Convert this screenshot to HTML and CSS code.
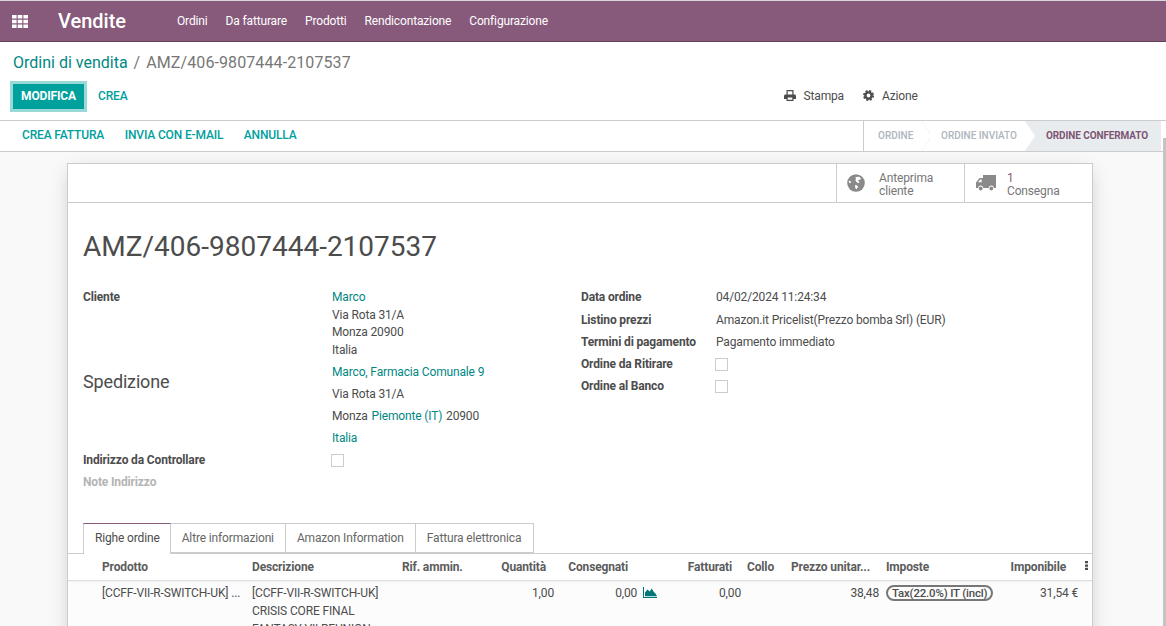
FILE: index.html
```html
<!DOCTYPE html>
<html lang="it">
<head>
    <meta charset="UTF-8">
    <title>AMZ/406-9807444-2107537 - Vendite</title>
    <link rel="stylesheet" href="styles.css">
</head>
<body>
    <nav class="navbar">
        <svg class="apps-icon" width="16" height="13" viewBox="0 0 16 13">
            <path fill="#fff" d="M0 0h4.600v3.600H0zM5.700 0h4.600v3.600H5.700zM11.400 0H16v3.600h-4.600zM0 4.700h4.600v3.600H0zM5.700 4.700h4.600v3.600H5.700zM11.400 4.700H16v3.600h-4.600zM0 9.400h4.600V13H0zM5.700 9.400h4.600V13H5.700zM11.400 9.400H16V13h-4.600z"/>
        </svg>
        <span class="brand">Vendite</span>
        <a class="nav-link">Ordini</a>
        <a class="nav-link">Da fatturare</a>
        <a class="nav-link">Prodotti</a>
        <a class="nav-link">Rendicontazione</a>
        <a class="nav-link">Configurazione</a>
    </nav>

    <header class="control-panel">
        <div class="breadcrumb"><a>Ordini di vendita</a><span class="sep">/</span><span class="current">AMZ/406-9807444-2107537</span></div>
        <div class="cp-row">
            <button class="btn-primary">MODIFICA</button>
            <button class="btn-link">CREA</button>
            <div class="cp-actions">
                <span class="cp-action">
                    <svg width="12" height="11" viewBox="0 0 12 11">
                        <path fill="#4c4c4c" d="M2.500 0h7v4.500h1c.8 0 1.500.7 1.500 1.500v3H9.500v2h-7V9H0V6c0-.8.7-1.500 1.500-1.500h1zM3.700 1.200v3.300h4.600V1.200zM3.700 7.500v2.300h4.600V7.500z"/>
                    </svg>
                    Stampa
                </span>
                <span class="cp-action">
                    <svg width="11" height="11" viewBox="0 0 12 12">
                        <circle cx="6" cy="6" r="3.400" fill="none" stroke="#4c4c4c" stroke-width="2.600"/>
                        <circle cx="6" cy="6" r="5" fill="none" stroke="#4c4c4c" stroke-width="2" stroke-dasharray="2.300 1.630"/>
                    </svg>
                    Azione
                </span>
            </div>
        </div>
    </header>

    <div class="statusbar">
        <div class="status-actions">
            <a>CREA FATTURA</a>
            <a>INVIA CON E-MAIL</a>
            <a>ANNULLA</a>
        </div>
        <div class="status-steps">
            <span class="step step-first">ORDINE</span>
            <span class="step step-second">ORDINE INVIATO</span>
            <span class="step step-active">ORDINE CONFERMATO</span>
        </div>
    </div>

    <main class="content">
        <div class="sheet">
            <div class="button-box">
                <div class="stat-button stat-preview">
                    <svg width="18" height="18" viewBox="0 0 18 18">
                        <circle cx="9" cy="9" r="8.800" fill="#8a8a8a"/>
                        <path fill="#fff" d="M9 3l3.200-.2 1.800 1.700-1 1.500-1.200-.5-.7 1.300 1.500 1.100-1.200 1.400-1.900-1.200-1.200-1.900.8-1.400-.9-1.100zM8 11l2.300.6.7 1.400-1.600 2.200-.9-.6-.4-2zM2 6.500l1.300.5.9 1.400-1.200.9-1.200-1.100z"/>
                    </svg>
                    <span class="stat-text">Anteprima<br>cliente</span>
                </div>
                <div class="stat-button stat-delivery">
                    <svg width="20" height="16" viewBox="0 0 20 16">
                        <path fill="#8a8a8a" d="M7 0h13v13h-2.200a2.500 2.500 0 0 0-5 0H7.200a2.500 2.500 0 0 0-5 0H0V7.500L3.500 3H7zM2 7.300h3.700V4.500H4.200z"/>
                        <circle cx="4.700" cy="13.500" r="1.900" fill="#8a8a8a"/>
                        <circle cx="15.300" cy="13.500" r="1.900" fill="#8a8a8a"/>
                    </svg>
                    <span class="stat-text"><span class="stat-value">1</span><br>Consegna</span>
                </div>
            </div>

            <h1 class="order-title">AMZ/406-9807444-2107537</h1>

            <div class="form-groups">
                <div class="form-left">
                    <div class="label">Cliente</div>
                    <div class="address">
                        <a>Marco</a><br>Via Rota 31/A<br>Monza 20900<br>Italia
                    </div>
                    <div class="label-big">Spedizione</div>
                    <div class="ship-line"><a>Marco, Farmacia Comunale 9</a></div>
                    <div class="ship-line">Via Rota 31/A</div>
                    <div class="ship-line">Monza <a class="gap">Piemonte (IT)</a> <span class="gap">20900</span></div>
                    <div class="ship-line"><a>Italia</a></div>
                    <div class="label row-22">Indirizzo da Controllare</div>
                    <div class="row-22"><span class="checkbox"></span></div>
                    <div class="label label-muted row-22">Note Indirizzo</div>
                    <div class="row-22"></div>
                </div>
                <div class="form-right">
                    <div class="label">Data ordine</div><div>04/02/2024 11:24:34</div>
                    <div class="label">Listino prezzi</div><div>Amazon.it Pricelist(Prezzo bomba Srl) (EUR)</div>
                    <div class="label">Termini di pagamento</div><div>Pagamento immediato</div>
                    <div class="label">Ordine da Ritirare</div><div><span class="checkbox"></span></div>
                    <div class="label">Ordine al Banco</div><div><span class="checkbox"></span></div>
                </div>
            </div>

            <div class="tabs">
                <span class="tab tab-active">Righe ordine</span>
                <span class="tab">Altre informazioni</span>
                <span class="tab">Amazon Information</span>
                <span class="tab">Fattura elettronica</span>
            </div>

            <table class="lines">
                <colgroup>
                    <col class="c-handle"><col class="c-product"><col class="c-desc"><col class="c-ref"><col class="c-qty"><col class="c-del"><col class="c-inv"><col class="c-pack"><col class="c-price"><col class="c-tax"><col class="c-sub"><col class="c-opt">
                </colgroup>
                <thead>
                    <tr>
                        <th></th>
                        <th>Prodotto</th>
                        <th>Descrizione</th>
                        <th>Rif. ammin.</th>
                        <th class="num">Quantità</th>
                        <th class="num th-del">Consegnati</th>
                        <th class="num th-inv">Fatturati</th>
                        <th class="th-pack">Collo</th>
                        <th class="num th-price">Prezzo unitar...</th>
                        <th class="th-tax">Imposte</th>
                        <th class="num th-sub">Imponibile</th>
                        <th class="th-opt">
                            <svg width="3" height="11" viewBox="0 0 4 12"><path fill="#4c4c4c" d="M0 0h4v3H0zM0 4.500h4v3H0zM0 9h4v3H0z"/></svg>
                        </th>
                    </tr>
                </thead>
                <tbody>
                    <tr>
                        <td></td>
                        <td class="nowrap">[CCFF-VII-R-SWITCH-UK] ...</td>
                        <td>[CCFF-VII-R-SWITCH-UK]<br>CRISIS CORE FINAL<br>FANTASY VII REUNION</td>
                        <td></td>
                        <td class="num">1,00</td>
                        <td class="num td-del">0,00
                            <svg class="chart-icon" width="14" height="11" viewBox="0 0 14 11">
                                <path fill="#00787a" d="M0 0h1v10h13v1H0z"/>
                                <path fill="#00787a" d="M2 9.300V5.500L4.500 2.500l2.200 2L8.800 1.500l2 3.500 1.700 1.500 1.500 2.800z"/>
                            </svg>
                        </td>
                        <td class="num td-inv">0,00</td>
                        <td></td>
                        <td class="num td-price">38,48</td>
                        <td class="td-tax"><span class="tax-badge">Tax(22.0%) IT (incl)</span></td>
                        <td class="num td-sub">31,54 €</td>
                        <td></td>
                    </tr>
                </tbody>
            </table>
        </div>
    </main>

    <div class="scroll-thumb"></div>
</body>
</html>
```

FILE: styles.css
```css
* {
    box-sizing: border-box;
}
html, body {
    height: 100%;
}
body {
    display: flex;
    flex-direction: column;
    margin: 0;
    overflow: hidden;
    font-family: Roboto, "Liberation Sans", sans-serif;
    font-size: 12px;
    letter-spacing: -0.15px;
    color: #4c4c4c;
    background-color: #fff;
    border-top: 1px solid #d8d8d8;
}
a {
    color: #008784;
}

/* top bar */
.navbar {
    display: flex;
    align-items: center;
    flex: none;
    height: 41px;
    padding-left: 12px;
    background-color: #875a7b;
    border-bottom: 1px solid #5f4058;
    color: #fff;
}
.apps-icon {
    margin-right: 30px;
}
.brand {
    width: 119px;
    font-size: 20px;
    font-weight: 500;
    letter-spacing: 0;
}
.nav-link {
    margin-right: 18px;
    color: #fff;
}

/* breadcrumb + buttons */
.control-panel {
    flex: none;
    height: 79px;
    padding: 10px 0 0 13px;
    border-bottom: 1px solid #ccc;
}
.breadcrumb {
    font-size: 16px;
    line-height: 21px;
    letter-spacing: 0;
    color: #777;
}
.current {
    letter-spacing: 0.1px;
}
.sep {
    margin: 0 6px;
}
.cp-row {
    display: flex;
    align-items: center;
    margin-top: 8px;
    margin-left: -3px;
    height: 31px;
}
.btn-primary {
    width: 77px;
    height: 31px;
    padding: 0 0 1px;
    font: 700 12px Roboto, sans-serif;
    letter-spacing: -0.15px;
    color: #fff;
    background-color: #00a09d;
    border: 3px solid #99d9d8;
}
.btn-link {
    margin-left: 11px;
    padding: 0 0 2px;
    font: 500 12px Roboto, sans-serif;
    letter-spacing: -0.15px;
    color: #00a09d;
    background: none;
    border: none;
}
.cp-actions {
    display: flex;
    gap: 19px;
    margin-left: 656px;
    padding-bottom: 2px;
}
.cp-action {
    display: flex;
    align-items: center;
    gap: 8px;
}

/* status bar */
.statusbar {
    display: flex;
    justify-content: space-between;
    flex: none;
    height: 31px;
    padding: 0 5px 0 22px;
    border-bottom: 1px solid #ccc;
}
.status-actions {
    display: flex;
    align-items: center;
    gap: 20.500px;
    padding-bottom: 2px;
    font-weight: 500;
}
.status-actions a {
    color: #00a09d;
}
.status-steps {
    display: flex;
    height: 30px;
    font-size: 10px;
    font-weight: 500;
    letter-spacing: 0;
    color: #adb5bd;
}
.step {
    display: flex;
    align-items: center;
    height: 100%;
    padding-bottom: 2px;
}
.step-first {
    width: 67px;
    padding-left: 14px;
    border-left: 1px solid #ccc;
    background: linear-gradient(to top right, transparent 49.500%, #e9ecef 49.500%, #e9ecef 52%, transparent 52%) 58px 0 / 9px 15px no-repeat,
        linear-gradient(to bottom right, transparent 49.500%, #e9ecef 49.500%, #e9ecef 52%, transparent 52%) 58px 15px / 9px 15px no-repeat;
}
.step-second {
    width: 95px;
    padding-left: 11px;
}
.step-active {
    width: 136px;
    padding-left: 21px;
    font-weight: 700;
    letter-spacing: -0.1px;
    color: #7d5673;
    background-color: #e9ecef;
    clip-path: polygon(0 0, 100% 0, 100% 100%, 0 100%, 10px 50%);
}

/* form sheet */
.content {
    flex: 1;
    min-height: 0;
    overflow: hidden;
    padding: 11px 73px 20px 67px;
    background-color: #f9f9f9;
}
.sheet {
    height: 600px;
    background-color: #fff;
    border: 1px solid #ccc;
    box-shadow: 0 5px 20px -5px rgba(0, 0, 0, 0.25);
}
.button-box {
    display: flex;
    justify-content: flex-end;
    height: 39px;
    border-bottom: 1px solid #ccc;
}
.stat-button {
    display: flex;
    align-items: center;
    width: 128px;
    height: 38px;
    padding-left: 10px;
    border-left: 1px solid #ccc;
    line-height: 13px;
    color: #777;
}
.stat-preview {
    gap: 14px;
}
.stat-delivery {
    gap: 11px;
    padding-left: 11px;
}
.stat-text {
    padding-top: 3px;
}
.stat-value {
    color: #875a7b;
}
.order-title {
    margin: 27px 0 0 15px;
    font-size: 28px;
    font-weight: 400;
    line-height: 33px;
    letter-spacing: 0;
}
.form-groups {
    display: flex;
    margin: 27px 0 0 15px;
}
.form-left {
    display: grid;
    grid-template-columns: 249px 249px;
}
.form-left > .label-big {
    grid-row: span 4;
    align-self: start;
    margin-top: 10px;
    font-size: 18px;
    font-weight: 400;
}
.form-left > .label-big ~ .ship-line {
    grid-column: 2;
}
.ship-line, .row-22 {
    height: 22px;
    line-height: 22px;
}
.address {
    margin-top: -1px;
    padding-bottom: 1px;
    line-height: 17.700px;
}
.gap {
    margin-left: 1px;
}
.label {
    font-weight: 700;
}
.label-muted {
    color: #b4b4b4;
}
.form-right {
    display: grid;
    grid-template-columns: 135px auto;
    grid-template-rows: 23px repeat(4, 22px);
    align-items: start;
    align-content: start;
    height: 111px;
    margin-top: -2px;
    line-height: 18px;
}
.checkbox {
    display: inline-block;
    width: 13px;
    height: 13px;
    margin-left: -1px;
    vertical-align: middle;
    background-color: #fff;
    border: 1px solid #ccc;
}

/* tabs */
.tabs {
    display: flex;
    margin: 30px 0 0 15px;
    height: 31px;
}
.tab {
    height: 30px;
    padding: 0 11px;
    line-height: 28px;
    color: #666;
    border: 1px solid #ccc;
    border-left: none;
}
.tab:last-child {
    padding-right: 12px;
}
.tab-active {
    position: relative;
    z-index: 1;
    height: 31px;
    padding-right: 10px;
    color: #4c4c4c;
    background-color: #fff;
    border-left: 1px solid #ccc;
    border-top-color: #875a7b;
    border-bottom: none;
}

/* order lines */
.lines {
    width: 1024px;
    table-layout: fixed;
    border-collapse: collapse;
    border-top: 1px solid #ccc;
    margin-top: -1px;
}
.c-handle { width: 29px; }
.c-product { width: 150px; }
.c-desc { width: 150px; }
.c-ref { width: 79px; }
.c-qty { width: 82px; }
.c-del { width: 104px; }
.c-inv { width: 83px; }
.c-pack { width: 38px; }
.c-price { width: 100px; }
.c-tax { width: 114px; }
.c-sub { width: 85px; }
.c-opt { width: 10px; }
.lines th {
    height: 27px;
    padding: 0 5px;
    text-align: left;
    font-weight: 700;
    white-space: nowrap;
    color: #5c5c5c;
    border-bottom: 1px solid #ddd;
}
.lines th.num {
    padding-right: 12px;
    text-align: right;
}
.lines th.th-del {
    padding-right: 34px;
}
.lines th.th-inv {
    padding-right: 13px;
}
.lines th.th-pack {
    padding-left: 2px;
}
.lines th.th-price {
    padding-right: 13px;
}
.lines th.th-tax {
    padding-left: 3px;
}
.lines th.th-sub {
    padding-right: 16px;
}
.lines th.th-opt {
    padding: 0 0 0 3px;
}
.lines td {
    padding: 3px 5px;
    line-height: 18px;
    vertical-align: top;
    background: linear-gradient(#f1f1f1, #fcfcfc 3px);
}
.lines td.num {
    padding-right: 4px;
    text-align: right;
}
.nowrap {
    white-space: nowrap;
    overflow: hidden;
}
.lines td.td-del {
    padding-right: 5px;
}
.chart-icon {
    margin-left: 3px;
    vertical-align: -1px;
}
.lines td.td-tax {
    padding-left: 3px;
}
.tax-badge {
    display: inline-block;
    padding: 0 4px;
    font-size: 11.400px;
    font-weight: 500;
    line-height: 12px;
    white-space: nowrap;
    border: 2px solid #777;
    border-radius: 8px;
}

.scroll-thumb {
    position: absolute;
    top: 138px;
    right: 0;
    width: 3px;
    height: 488px;
    background-color: #c4c4c4;
}
```
